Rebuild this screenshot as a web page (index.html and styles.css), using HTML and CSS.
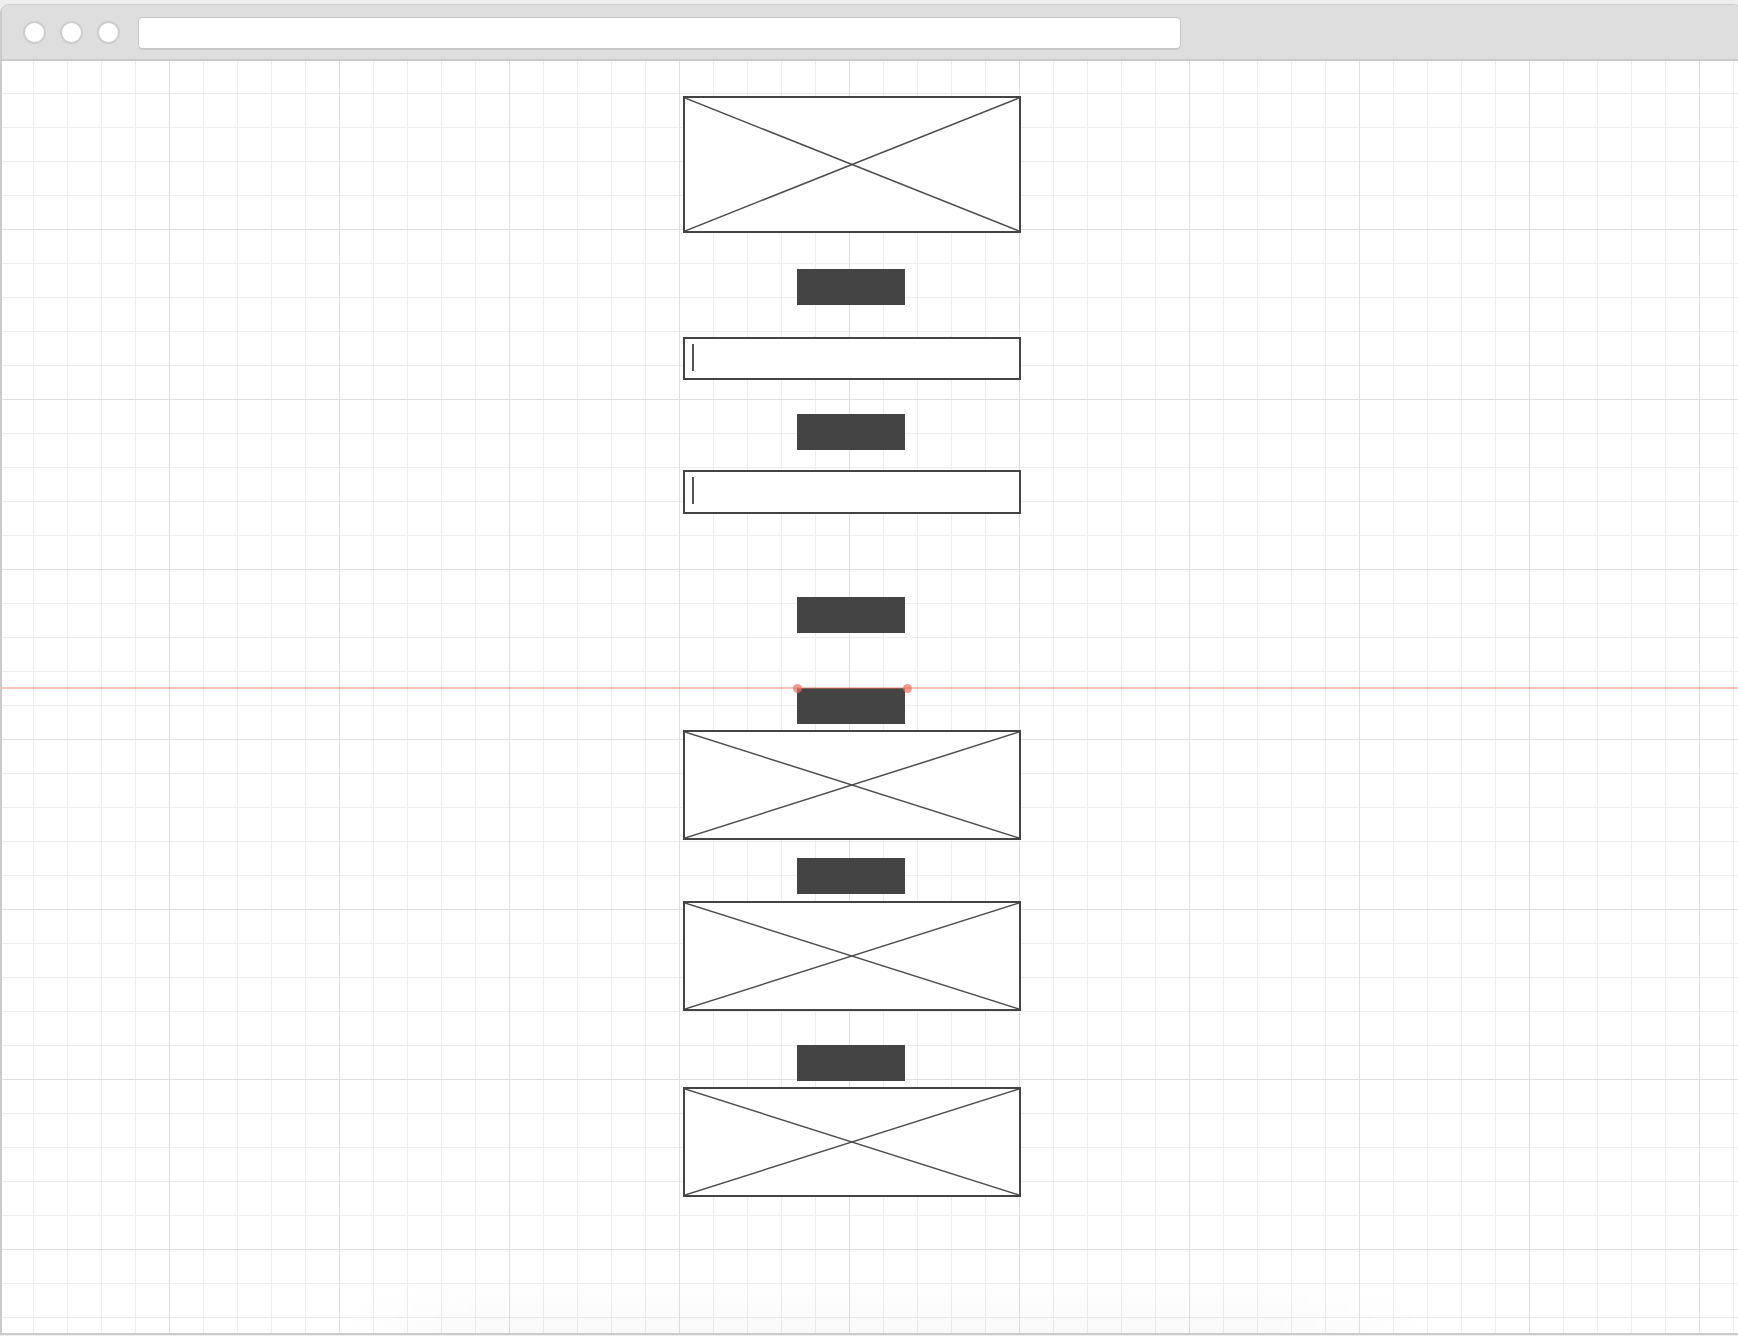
FILE: index.html
```html
<!DOCTYPE html>
<html lang="en">
<head>
<meta charset="utf-8">
<title>Wireframe</title>
<link rel="stylesheet" href="styles.css">
</head>
<body>
<div class="window">
  <div class="toolbar">
    <div class="lights">
      <span class="light"></span>
      <span class="light"></span>
      <span class="light"></span>
    </div>
    <div class="address"></div>
  </div>
  <div class="canvas">
    <div class="column">
      <div class="ph ph-lg">
        <svg viewBox="0 0 100 100" preserveAspectRatio="none"><line x1="0" y1="0" x2="100" y2="100"/><line x1="100" y1="0" x2="0" y2="100"/></svg>
      </div>
      <div class="bar mt-36"></div>
      <div class="field mt-32"><span class="caret"></span></div>
      <div class="bar mt-34"></div>
      <div class="field field-tall mt-20"><span class="caret"></span></div>
      <div class="bar mt-83"></div>
      <div class="bar mt-55"></div>
      <div class="ph ph-md mt-6">
        <svg viewBox="0 0 100 100" preserveAspectRatio="none"><line x1="0" y1="0" x2="100" y2="100"/><line x1="100" y1="0" x2="0" y2="100"/></svg>
      </div>
      <div class="bar mt-18"></div>
      <div class="ph ph-md mt-7">
        <svg viewBox="0 0 100 100" preserveAspectRatio="none"><line x1="0" y1="0" x2="100" y2="100"/><line x1="100" y1="0" x2="0" y2="100"/></svg>
      </div>
      <div class="bar mt-34"></div>
      <div class="ph ph-md mt-6">
        <svg viewBox="0 0 100 100" preserveAspectRatio="none"><line x1="0" y1="0" x2="100" y2="100"/><line x1="100" y1="0" x2="0" y2="100"/></svg>
      </div>
    </div>
    <div class="guide">
      <span class="guide-dot guide-dot-a"></span>
      <span class="guide-dot guide-dot-b"></span>
    </div>
    <div class="bottom-shade"></div>
  </div>
</div>
</body>
</html>
```

FILE: styles.css
```css
html, body {
  margin: 0;
  padding: 0;
}

body {
  background: #efefef;
  height: 1336px;
  overflow: hidden;
  font-family: "Liberation Sans", Arial, sans-serif;
}

.window {
  margin-top: 4px;
  width: 1742px;
  height: 1331px;
  box-sizing: border-box;
  border: 2px solid #cbcbcb;
  border-top-width: 1px;
  border-radius: 9px 9px 0 0;
  overflow: hidden;
  display: flex;
  flex-direction: column;
  background: #fff;
}

.toolbar {
  height: 56px;
  flex: none;
  box-sizing: border-box;
  background: #dedede;
  border-bottom: 2px solid #cbcbcb;
  display: flex;
  align-items: flex-start;
  padding-left: 21px;
}

.lights {
  display: flex;
  gap: 14px;
  margin-top: 16px;
}

.light {
  display: block;
  width: 23px;
  height: 23px;
  box-sizing: border-box;
  border: 2px solid #cdcdcd;
  border-radius: 50%;
  background: #fff;
}

.address {
  margin-top: 12px;
  margin-left: 18px;
  width: 1043px;
  height: 33px;
  box-sizing: border-box;
  background: #fff;
  border: 1px solid #c6c6c6;
  border-bottom-width: 2px;
  border-radius: 5px;
}

.canvas {
  flex: 1;
  position: relative;
  background-color: #fff;
  background-image:
    linear-gradient(to right, #e0e0e0 1px, transparent 1px),
    linear-gradient(to bottom, #e0e0e0 1px, transparent 1px),
    linear-gradient(to right, #ededed 1px, transparent 1px),
    linear-gradient(to bottom, #ededed 1px, transparent 1px);
  background-size: 170px 170px, 170px 170px, 34px 34px, 34px 34px;
  background-position: -3px -2px;
  overflow: hidden;
}

.column {
  display: flex;
  flex-direction: column;
  align-items: flex-start;
  width: 338px;
  margin-left: 681px;
  padding-top: 35px;
}

.ph {
  width: 338px;
  box-sizing: border-box;
  border: 2px solid #444;
  background: #fff;
}

.ph-lg { height: 137px; }
.ph-md { height: 110px; }

.ph svg {
  display: block;
  width: 100%;
  height: 100%;
}

.ph line {
  stroke: #4d4d4d;
  stroke-width: 1.5;
  vector-effect: non-scaling-stroke;
}

.bar {
  width: 108px;
  height: 36px;
  margin-left: 114px;
  background: #444;
}

.field {
  width: 338px;
  height: 43px;
  box-sizing: border-box;
  border: 2px solid #444;
  background: #fff;
  padding: 5px 0 0 7px;
}

.field-tall { height: 44px; }

.caret {
  display: block;
  width: 2px;
  height: 27px;
  background: #555;
}

.mt-6 { margin-top: 6px; }
.mt-7 { margin-top: 7px; }
.mt-18 { margin-top: 18px; }
.mt-20 { margin-top: 20px; }
.mt-32 { margin-top: 32px; }
.mt-34 { margin-top: 34px; }
.mt-36 { margin-top: 36px; }
.mt-55 { margin-top: 55px; }
.mt-83 { margin-top: 83px; }

.guide {
  position: absolute;
  left: 0;
  right: 0;
  top: 626px;
  height: 2px;
  background: rgba(242, 120, 100, 0.45);
}

.guide-dot {
  position: absolute;
  top: -3.5px;
  width: 9px;
  height: 9px;
  border-radius: 50%;
  background: rgba(232, 112, 95, 0.7);
}

.guide-dot-a { left: 791px; }
.guide-dot-b { left: 901px; }

.bottom-shade {
  position: absolute;
  left: 330px;
  bottom: 0;
  width: 1100px;
  height: 50px;
  background: linear-gradient(to bottom, rgba(0, 0, 0, 0), rgba(0, 0, 0, 0.025));
  -webkit-mask-image: linear-gradient(to right, transparent, #000 15%, #000 85%, transparent);
  mask-image: linear-gradient(to right, transparent, #000 15%, #000 85%, transparent);
  pointer-events: none;
}
```
